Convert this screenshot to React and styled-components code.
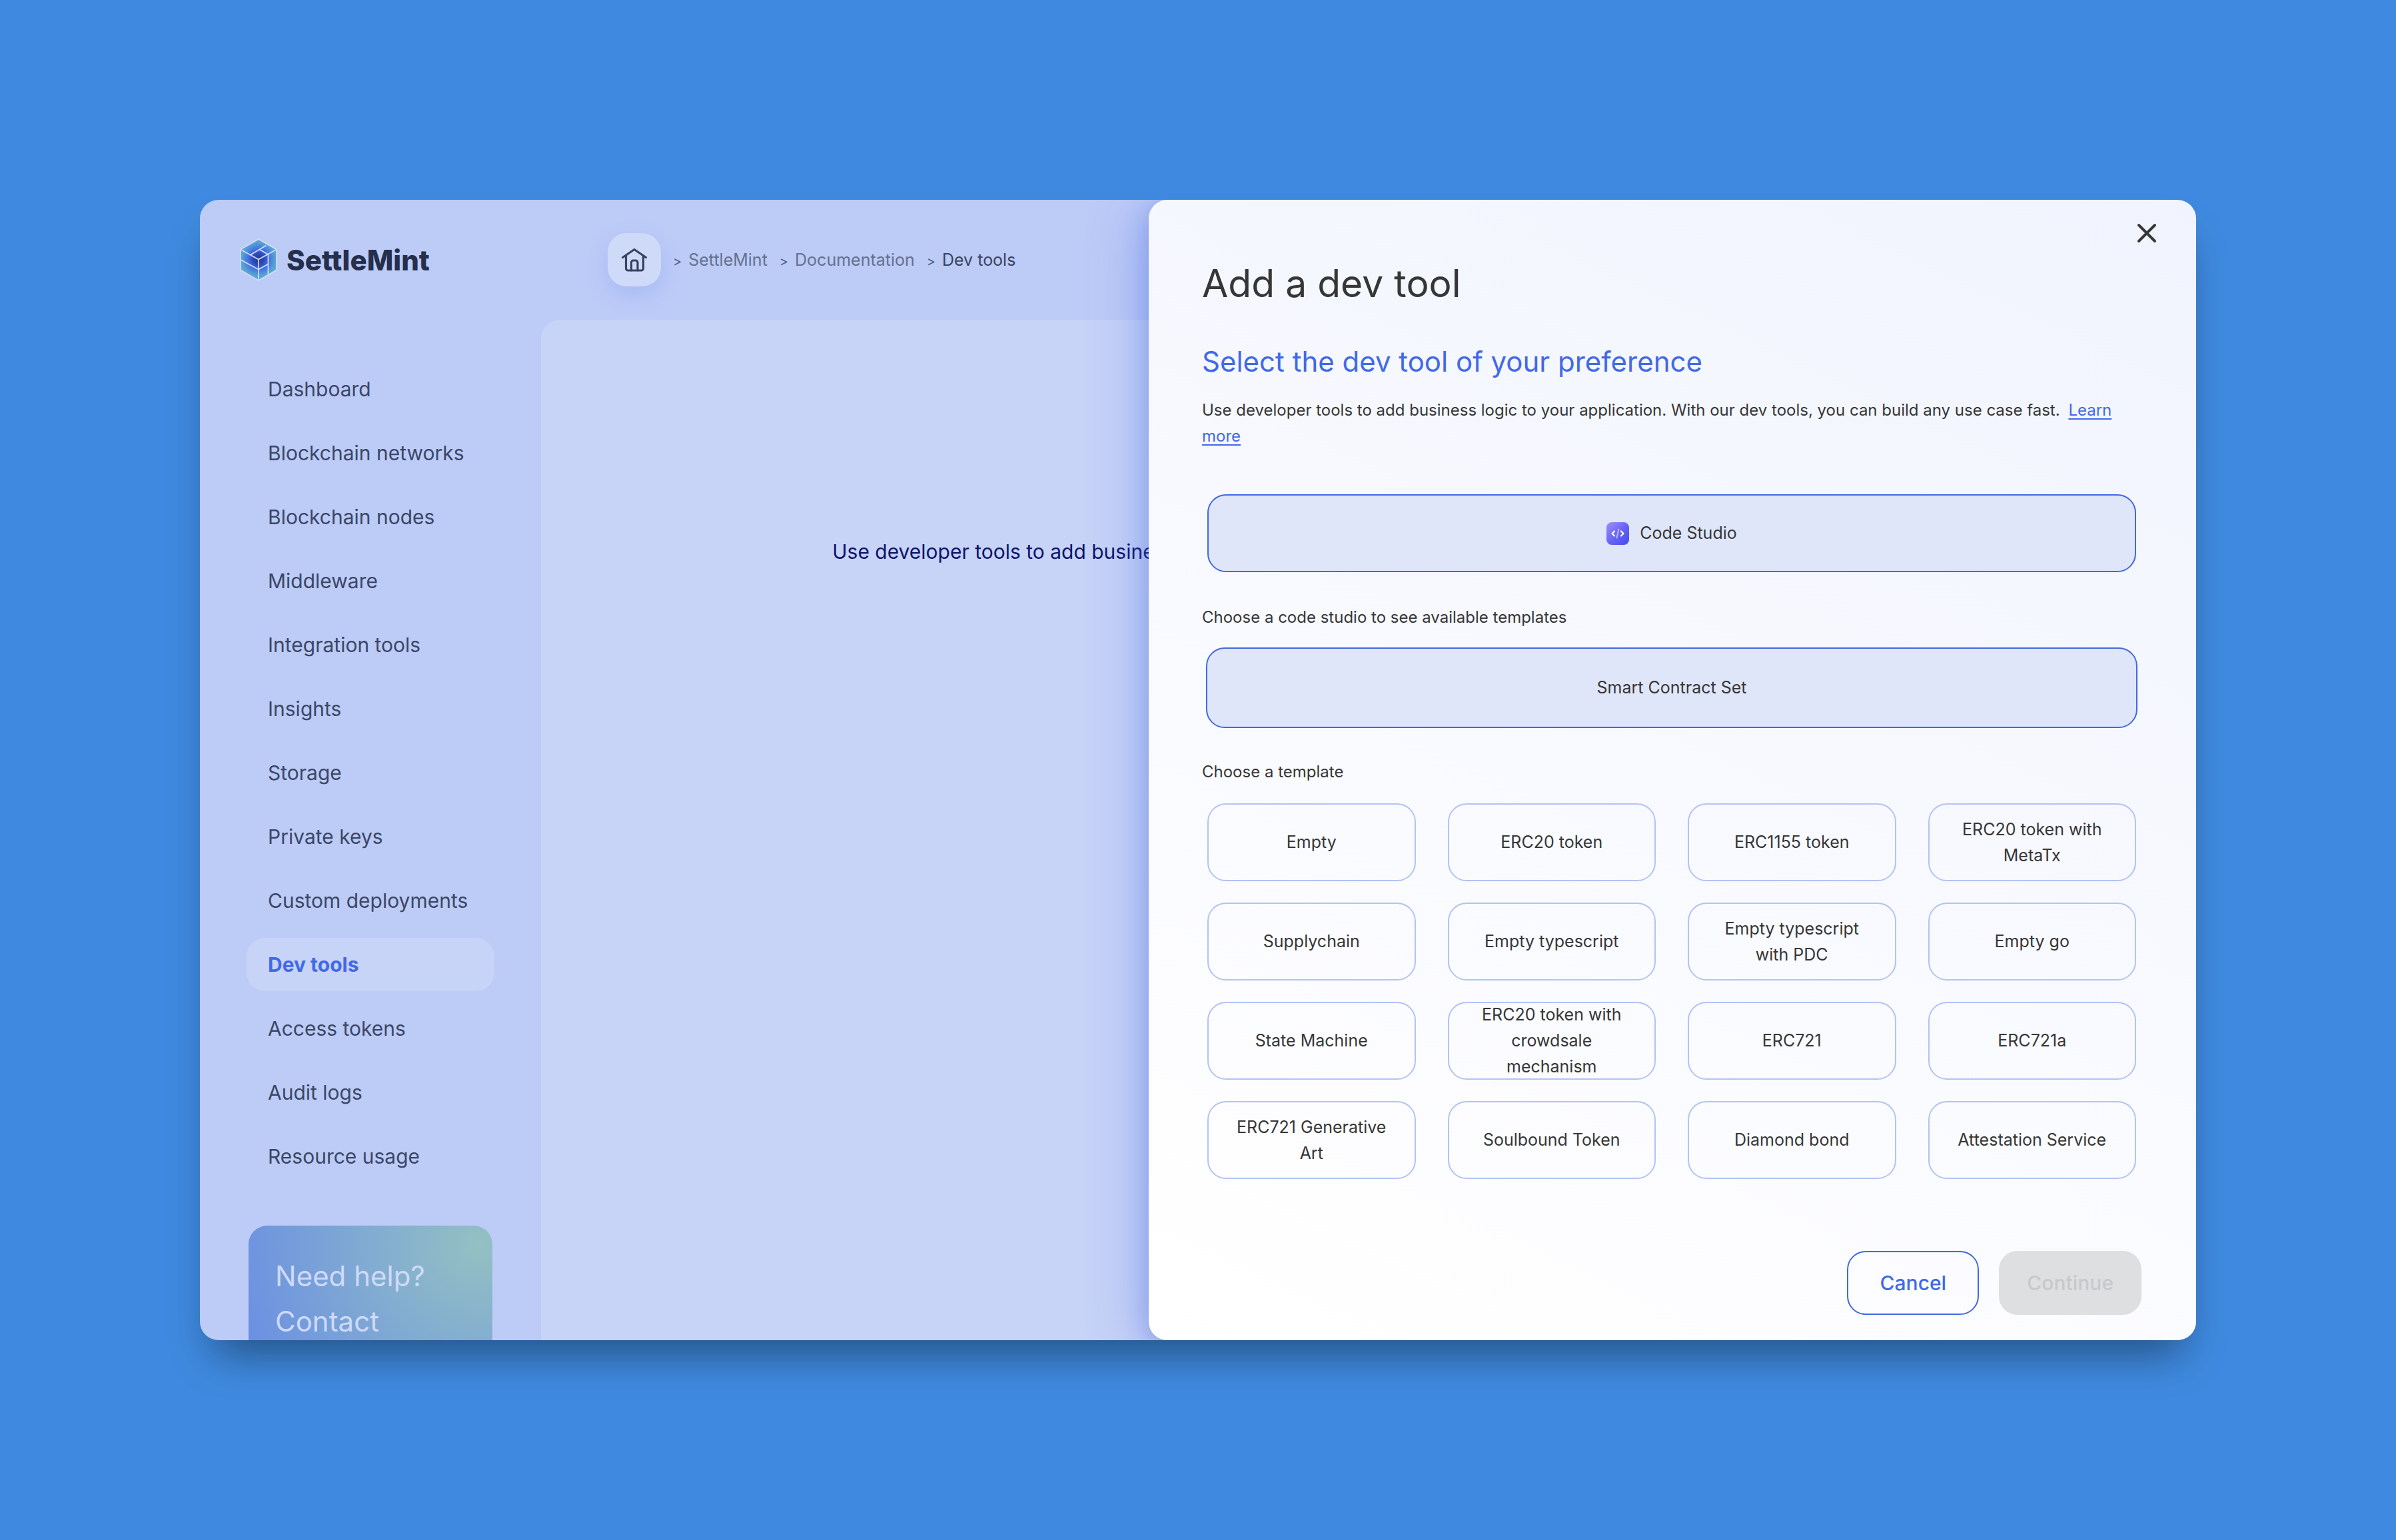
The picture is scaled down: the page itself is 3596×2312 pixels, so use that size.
import React, { useState } from "react";
import styled, { createGlobalStyle } from "styled-components";

const GlobalStyle = createGlobalStyle`
  *, *::before, *::after { box-sizing: border-box; }
  body {
    margin: 0;
    background: #3f8ae0;
    font-family: Inter, "Liberation Sans", sans-serif;
    color: #363636;
  }
  h1, h2, h3, p, ul, ol { margin: 0; padding: 0; font-weight: 400; }
  ul, ol { list-style: none; }
  button { font: inherit; color: inherit; cursor: pointer; }
`;

const Page = styled.div`
  min-height: 100vh;
  padding: 300px;
`;

const Window = styled.div`
  position: relative;
  display: flex;
  height: calc(100vh - 600px);
  overflow: hidden;
  border-radius: 28px;
  background: #bdcbf7;
`;

const WindowShadow = styled.div`
  border-radius: 28px;
  box-shadow: 0 40px 64px -20px rgba(0, 0, 0, 0.42);
`;

const Sidebar = styled.aside`
  flex: 0 0 512px;
  padding: 58px 70px 0;
`;

const Brand = styled.a`
  display: flex;
  align-items: center;
  gap: 14px;
  height: 64px;
  margin-left: -10px;
  color: #252f4c;
  font-size: 42px;
  font-weight: 800;
  text-decoration: none;
`;

const NavList = styled.ul`
  display: flex;
  flex-direction: column;
  gap: 16px;
  margin-top: 122px;
`;

const NavLink = styled.a`
  display: flex;
  align-items: center;
  height: 80px;
  padding: 0 32px;
  border-radius: 28px;
  background: ${(p) => (p.$active ? "#c7d3f7" : "transparent")};
  color: ${(p) => (p.$active ? "#4169e8" : "#3a4766")};
  font-size: 30px;
  font-weight: ${(p) => (p.$active ? 700 : 400)};
  text-decoration: none;
  white-space: nowrap;
`;

const HelpCard = styled.section`
  height: 340px;
  margin: 64px 3px 0;
  padding: 42px 40px;
  border-radius: 28px;
  background: radial-gradient(circle 380px at 95% 8%, #94c0c3 0, #7fa9d3 50%, #6b8fe3 100%);
  color: #cfdaf8;
  font-size: 42px;
  line-height: 68px;
`;

const Workspace = styled.div`
  flex: 1;
  display: flex;
  flex-direction: column;
`;

const TopBar = styled.header`
  display: flex;
  align-items: center;
  flex: 0 0 180px;
  padding-left: 100px;
`;

const HomeButton = styled.button`
  display: flex;
  align-items: center;
  justify-content: center;
  width: 80px;
  height: 80px;
  padding: 0;
  border: 0;
  border-radius: 28px;
  background: #cfdaf8;
  box-shadow: 0 12px 32px rgba(80, 120, 240, 0.2);
`;

const Crumbs = styled.ol`
  display: flex;
  align-items: center;
  gap: 18px;
  margin-left: 18px;
`;

const Crumb = styled.li`
  display: flex;
  align-items: center;
  gap: 10px;
  color: ${(p) => (p.$current ? "#38445f" : "#64718f")};
  font-size: 25px;

  &::before {
    content: ">";
    color: #55617e;
    font-size: 20px;
    line-height: 1;
    padding-top: 4px;
  }
`;

const CrumbLink = styled.a`
  color: inherit;
  text-decoration: none;
`;

const Panel = styled.main`
  flex: 1;
  padding-top: 328px;
  border-top-left-radius: 28px;
  background: #c7d3f7;
  color: #0d1469;
  font-size: 30px;
  line-height: 40px;
  text-align: center;
  white-space: nowrap;
`;

const Drawer = styled.section`
  position: absolute;
  top: 0;
  right: 0;
  bottom: 0;
  display: flex;
  flex-direction: column;
  width: 1572px;
  max-width: 100%;
  padding: 90px 82px 38px 80px;
  border-radius: 28px;
  background: linear-gradient(205deg, #f1f4fe 0%, #f6f8fe 38%, #fafbff 62%, #ffffff 100%);
  box-shadow: -12px 12px 84px rgba(60, 100, 230, 0.3), -4px 8px 32px rgba(60, 90, 210, 0.25);
`;

const CloseButton = styled.button`
  position: absolute;
  top: 26px;
  right: 50px;
  display: flex;
  align-items: center;
  justify-content: center;
  width: 48px;
  height: 48px;
  padding: 0;
  border: 0;
  background: none;
`;

const Title = styled.h1`
  font-size: 57px;
  line-height: 72px;
`;

const Subtitle = styled.h2`
  margin-top: 53px;
  color: #4169e8;
  font-size: 42px;
  line-height: 56px;
`;

const Intro = styled.p`
  margin-top: 25px;
  font-size: 24px;
  line-height: 39px;
`;

const LearnLink = styled.a`
  margin-left: 6px;
  color: #4169e8;
  text-underline-offset: 4px;
  text-decoration-thickness: 2px;
`;

const Label = styled.h3`
  font-size: 24px;
  line-height: 39px;
`;

const Group = styled.div`
  display: grid;
  grid-template-columns: repeat(${(p) => p.$columns}, 1fr);
  gap: 32px 48px;
  padding: ${(p) => p.$space};
`;

const Option = styled.button`
  display: flex;
  align-items: center;
  justify-content: center;
  gap: 16px;
  height: ${(p) => (p.$tall ? 121 : 117)}px;
  padding: 0 36px;
  border: 2px solid ${(p) => (p.$selected ? "#4169e1" : "#b3c3f6")};
  border-radius: 28px;
  background: ${(p) => (p.$selected ? "#e0e6fa" : "transparent")};
  font-size: 25px;
  line-height: 39px;
  text-align: center;
`;

const Footer = styled.footer`
  display: flex;
  justify-content: flex-end;
  gap: 30px;
  margin-top: auto;
`;

const Action = styled.button`
  min-width: 198px;
  height: 96px;
  padding: 0 40px;
  border: 2px solid ${(p) => (p.disabled ? "#dedfe1" : "#4169e1")};
  border-radius: 28px;
  background: ${(p) => (p.disabled ? "#dedfe1" : "transparent")};
  color: ${(p) => (p.disabled ? "#c8c9cc" : "#4169e8")};
  font-size: 30px;
  font-weight: 500;
`;

const LogoMark = () => (
  <svg width="56" height="64" viewBox="0 0 56 64" fill="none" aria-hidden="true">
    <defs>
      <radialGradient id="cube" gradientUnits="userSpaceOnUse" cx="28" cy="31" r="31">
        <stop offset="0" stopColor="#27379a" />
        <stop offset="0.25" stopColor="#2c47b4" />
        <stop offset="0.5" stopColor="#4270e4" />
        <stop offset="0.78" stopColor="#559fd6" />
        <stop offset="1" stopColor="#64b0c8" />
      </radialGradient>
    </defs>
    <g stroke="#d3ddf9" strokeWidth="1.7" strokeLinejoin="round">
      <path d="M28 1 55 16.5v31L28 63 1 47.500V16.500Z" fill="url(#cube)" />
      <path d="M1 16.500 28 31.500 55 16.500M28 31.500V63M16 24.500 39.500 10.500M29.500 16.500 42.500 24V54.500M1 32 28 46.500 42.500 38.500" />
    </g>
  </svg>
);

const HomeIcon = () => (
  <svg width="40" height="36" viewBox="0 0 40 36" fill="none" stroke="#39445f" strokeWidth="3.2" strokeLinecap="round" strokeLinejoin="round" aria-hidden="true">
    <path d="M2.500 14.500 20 2.500 37.500 14.500" />
    <path d="M7.500 12v19a3 3 0 0 0 3 3h20a3 3 0 0 0 3-3V12" />
    <path d="M15.500 34V22a3 3 0 0 1 3-3h3.500a3 3 0 0 1 3 3v12" />
  </svg>
);

const CloseIcon = () => (
  <svg width="30" height="30" viewBox="0 0 30 30" fill="none" stroke="#363636" strokeWidth="4" strokeLinecap="round" aria-hidden="true">
    <path d="M3 3 27 27M27 3 3 27" />
  </svg>
);

const CodeStudioIcon = () => (
  <svg width="34" height="34" viewBox="0 0 34 34" fill="none" strokeLinecap="round" strokeLinejoin="round" aria-hidden="true">
    <defs>
      <linearGradient id="studio" x1="0" y1="0" x2="1" y2="1">
        <stop offset="0" stopColor="#9d8ff8" />
        <stop offset="0.5" stopColor="#6a66f4" />
        <stop offset="1" stopColor="#4148ee" />
      </linearGradient>
    </defs>
    <rect width="34" height="34" rx="8" fill="url(#studio)" />
    <path d="M12 13.500 8.500 17l3.500 3.500M22 13.500l3.500 3.500-3.500 3.500" stroke="#fff" strokeWidth="2.200" />
    <path d="M18.500 10.500 15.500 23.500" stroke="#b9b6fb" strokeWidth="2" />
  </svg>
);

const NAV = [
  "Dashboard", "Blockchain networks", "Blockchain nodes", "Middleware", "Integration tools",
  "Insights", "Storage", "Private keys", "Custom deployments", "Dev tools",
  "Access tokens", "Audit logs", "Resource usage",
];

const TEMPLATES = [
  "Empty", "ERC20 token", "ERC1155 token", "ERC20 token with MetaTx",
  "Supplychain", "Empty typescript", "Empty typescript with PDC", "Empty go",
  "State Machine", "ERC20 token with crowdsale mechanism", "ERC721", "ERC721a",
  "ERC721 Generative Art", "Soulbound Token", "Diamond bond", "Attestation Service",
];

const SUMMARY =
  "Use developer tools to add business logic to your application. With our dev tools, you can build any use case fast.";

export default function App() {
  const [template, setTemplate] = useState(null);
  return (
    <>
      <GlobalStyle />
      <Page>
        <WindowShadow>
          <Window>
            <Sidebar>
              <Brand href="#">
                <LogoMark />
                SettleMint
              </Brand>
              <nav>
                <NavList>
                  {NAV.map((name) => (
                    <li key={name}>
                      <NavLink href="#" $active={name === "Dev tools"}>{name}</NavLink>
                    </li>
                  ))}
                </NavList>
              </nav>
              <HelpCard>Need help? Contact</HelpCard>
            </Sidebar>
            <Workspace>
              <TopBar>
                <HomeButton type="button" aria-label="Home"><HomeIcon /></HomeButton>
                <nav>
                  <Crumbs>
                    <Crumb><CrumbLink href="#">SettleMint</CrumbLink></Crumb>
                    <Crumb><CrumbLink href="#">Documentation</CrumbLink></Crumb>
                    <Crumb $current>Dev tools</Crumb>
                  </Crumbs>
                </nav>
              </TopBar>
              <Panel>
                <p>{SUMMARY}</p>
              </Panel>
            </Workspace>
            <Drawer role="dialog" aria-labelledby="drawer-title">
              <CloseButton type="button" aria-label="Close"><CloseIcon /></CloseButton>
              <Title id="drawer-title">Add a dev tool</Title>
              <Subtitle>Select the dev tool of your preference</Subtitle>
              <Intro>
                {SUMMARY} <LearnLink href="#">Learn more</LearnLink>
              </Intro>
              <Group $columns={1} $space="68px 8px 48px">
                <Option type="button" aria-pressed="true" $selected><CodeStudioIcon />Code Studio</Option>
              </Group>
              <Label>Choose a code studio to see available templates</Label>
              <Group $columns={1} $space="26px 6px 46px">
                <Option type="button" aria-pressed="true" $selected $tall>Smart Contract Set</Option>
              </Group>
              <Label>Choose a template</Label>
              <Group $columns={4} $space="28px 8px 0">
                {TEMPLATES.map((name) => (
                  <Option
                    key={name}
                    type="button"
                    aria-pressed={template === name}
                    $selected={template === name}
                    onClick={() => setTemplate(name)}
                  >
                    {name}
                  </Option>
                ))}
              </Group>
              <Footer>
                <Action type="button">Cancel</Action>
                <Action type="button" disabled={!template}>Continue</Action>
              </Footer>
            </Drawer>
          </Window>
        </WindowShadow>
      </Page>
    </>
  );
}
